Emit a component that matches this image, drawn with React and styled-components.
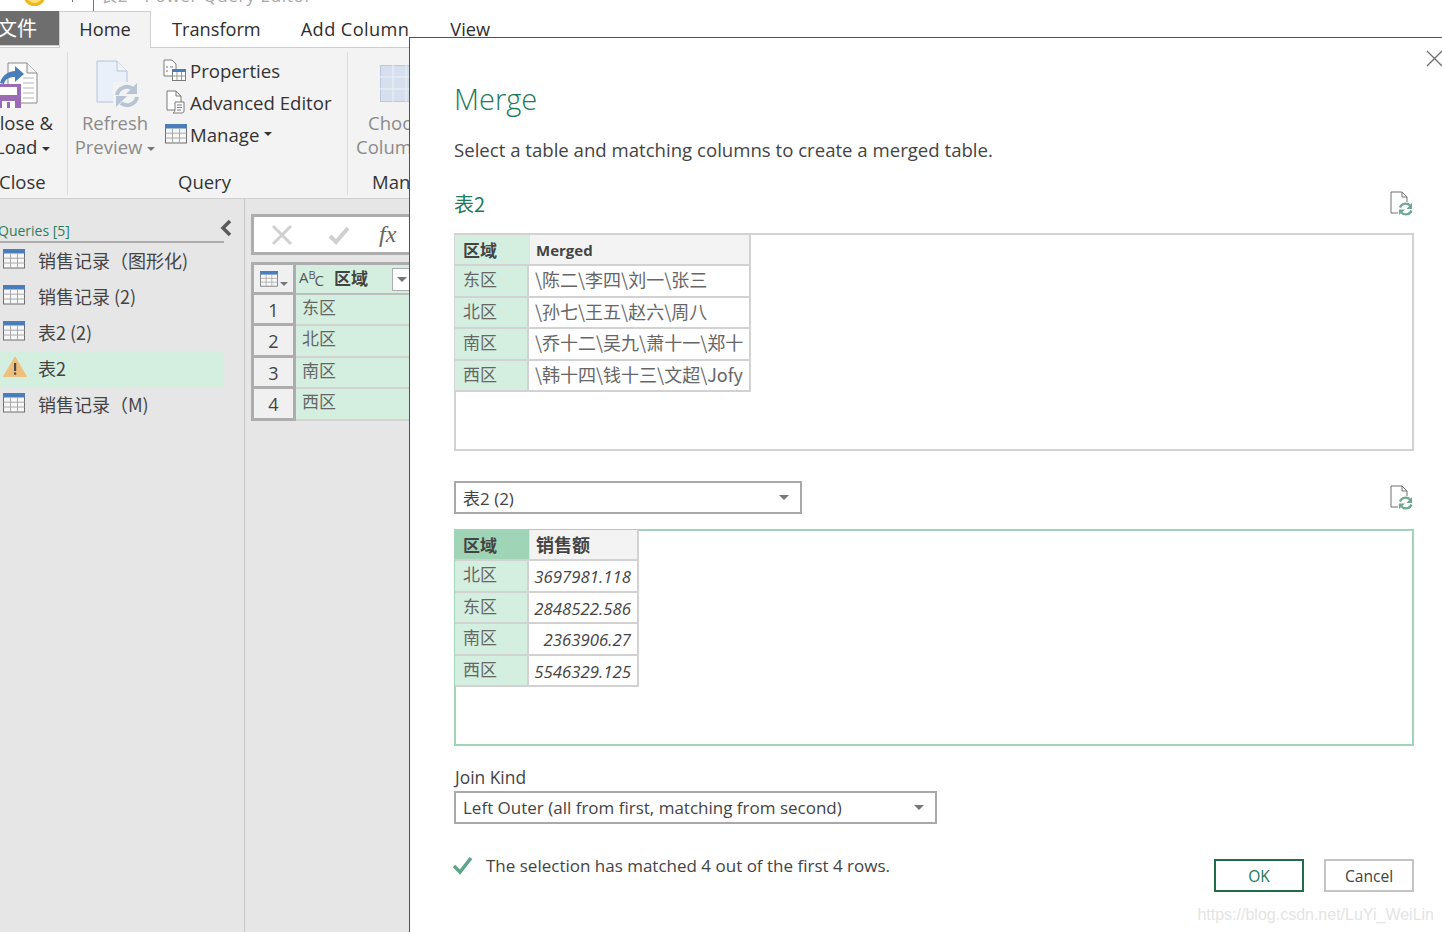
import React from 'react';
import styled, { createGlobalStyle } from 'styled-components';

const UI = '"Open Sans", "Noto Sans CJK SC", sans-serif';
const CJK = '"Noto Sans CJK SC", "Open Sans", sans-serif';

const Global = createGlobalStyle`
  html, body { margin: 0; padding: 0; background: #fff; overflow: hidden; }
  body { font-family: ${UI}; color: #333; }
  * { box-sizing: border-box; }
`;

const Page = styled.div`
  position: relative;
  width: 1442px;
  height: 932px;
  overflow: hidden;
  display: flex;
  flex-direction: column;
  background: #e6e6e6;
`;

/* title bar, mostly cut off by the screenshot */
const TitleBar = styled.div`
  height: 11px;
  flex: none;
  background: #fff;
  display: flex;
  align-items: flex-start;
  overflow: hidden;
  padding-left: 23px;
`;
const Smiley = styled.div`
  width: 23px;
  height: 23px;
  flex: none;
  margin-top: -17px;
  border-radius: 50%;
  border: 3px solid #f3b51d;
  background: #ffe37a;
`;
const TitleTick = styled.div`
  width: 1px;
  height: ${p => p.$height}px;
  background: #777;
  margin-left: ${p => p.$gap}px;
`;
const TitleText = styled.div`
  margin: -4px 0 0 6px;
  line-height: 0;
  font-size: 17px;
  letter-spacing: 0.7px;
  color: #a8a8a8;
  white-space: nowrap;
`;

const TabBar = styled.div`
  height: 37px;
  flex: none;
  display: flex;
  background: #fff;
  border-bottom: 1px solid #cfcfcf;
`;
const FileTab = styled.div`
  width: 59px;
  height: 34px;
  background: #6e6e6e;
  color: #fff;
  font: 20px/34px ${CJK};
  white-space: nowrap;
  overflow: hidden;
  text-indent: -3px;
  box-shadow: 0 1px 0 #cfcfcf;
`;
const HomeTab = styled.div`
  width: 92px;
  height: 37px;
  background: #f3f3f3;
  border: 1px solid #cfcfcf;
  border-bottom: none;
  text-align: center;
  font-size: 18.2px;
  line-height: 35px;
  color: #2d2d2d;
`;
const Tab = styled.div`
  font-size: 18.2px;
  line-height: 37px;
  color: #2d2d2d;
  margin-left: ${p => p.$left}px;
  letter-spacing: ${p => p.$track || 0}px;
  white-space: nowrap;
`;

const Ribbon = styled.div`
  height: 151px;
  flex: none;
  display: flex;
  background: #f3f3f3;
  border-bottom: 1px solid #cfcfcf;
  padding-top: 4px;
`;
const Group = styled.div`
  width: ${p => p.$width}px;
  flex: none;
  height: 143px;
  display: flex;
  flex-direction: column;
  border-right: ${p => (p.$last ? 'none' : '1px solid #dcdcdc')};
  overflow: hidden;
`;
const GroupBody = styled.div`
  height: 115px;
  flex: none;
  display: flex;
`;
const GroupLabel = styled.div`
  height: 28px;
  font-size: 18.5px;
  line-height: 29px;
  color: #333;
  text-align: left;
  margin-left: ${p => p.$left || 0}px;
  white-space: nowrap;
`;
const BigButton = styled.div`
  display: flex;
  flex-direction: column;
  align-items: ${p => p.$align || 'center'};
  width: ${p => p.$width}px;
  flex: none;
  padding-top: ${p => p.$top || 0}px;
  white-space: nowrap;
`;
const BigIcon = styled.div`
  flex: none;
  margin-left: ${p => p.$left || 0}px;
  margin-bottom: ${p => p.$bottom}px;
  svg { display: block; }
`;
const BigLabel = styled.div`
  font-size: 18.5px;
  line-height: 24px;
  margin-left: ${p => p.$left || 0}px;
  color: ${p => (p.$muted ? '#8b8b8b' : '#333')};
`;
const Caret = styled.span`
  display: inline-block;
  width: 0;
  height: 0;
  margin-left: ${p => p.$gap ?? 5}px;
  vertical-align: 3px;
  border-left: 4px solid transparent;
  border-right: 4px solid transparent;
  border-top: 4px solid ${p => p.$color || '#333'};
`;
const CornerCaret = styled(Caret)`
  margin: 10px 0 0 1px;
`;
const SmallStack = styled.div`
  display: flex;
  flex-direction: column;
  margin-left: 1px;
  padding-top: 2px;
`;
const SmallButton = styled.div`
  height: 32px;
  display: flex;
  align-items: center;
  gap: 2px;
  font-size: 18.6px;
  color: #333;
  white-space: nowrap;
`;
const SmallIcon = styled.div`
  width: 25px;
  height: 26px;
  flex: none;
  display: flex;
  align-items: center;
  justify-content: center;
`;

const Workspace = styled.div`
  flex: 1;
  display: flex;
`;
const QueryPane = styled.div`
  width: 245px;
  flex: none;
  border-right: 1px solid #c9c9c9;
  padding-top: 18px;
`;
const QueryHeader = styled.div`
  width: 224px;
  height: 26px;
  border-bottom: 2px solid #adadad;
  display: flex;
  align-items: flex-end;
  position: relative;
`;
const QueryTitle = styled.div`
  font-size: 14px;
  line-height: 24px;
  color: #2b7f5f;
  margin: 0 0 -2px -2px;
  white-space: nowrap;
`;
const Collapse = styled.div`
  position: absolute;
  left: 220px;
  top: 2px;
`;
const QueryRow = styled.div`
  width: 224px;
  height: 36px;
  display: flex;
  align-items: center;
  gap: 13px;
  padding: 0 0 2px 3px;
  background: ${p => (p.$active ? '#d4efe0' : 'transparent')};
  color: #444;
  font: 18px ${CJK};
  white-space: nowrap;
`;
const QueryIcon = styled.div`
  width: 22px;
  height: 22px;
  flex: none;
  margin-top: -3px;
`;

const GridArea = styled.div`
  flex: 1;
  padding: 15px 0 0 6px;
`;
const FormulaBar = styled.div`
  height: 41px;
  border: 3px solid #adadad;
  border-right: none;
  background: #fff;
  display: flex;
  align-items: center;
  padding-left: 17px;
  gap: 35px;
`;
const FxMark = styled.div`
  font: italic 24px "Liberation Serif", serif;
  color: #666;
  margin-left: -6px;
`;
const DataGrid = styled.div`
  margin-top: 7px;
  display: grid;
  grid-template-columns: 42px 1fr;
  grid-template-rows: 30px repeat(4, 31.4px);
  border-top: 3px solid #adadad;
  border-left: 3px solid #adadad;
`;
const CornerCell = styled.div`
  background: #f0f0f0;
  border-right: 3px solid #adadad;
  border-bottom: 3px solid #adadad;
  display: flex;
  align-items: center;
  justify-content: center;
`;
const GridHead = styled.div`
  background: #d4efe0;
  border-bottom: 2px solid #bdbdbd;
  display: flex;
  align-items: center;
  padding: 0 0 4px 3px;
  gap: 10px;
  font: bold 17px ${CJK};
  color: #444;
  position: relative;
`;
const TypeMark = styled.span`
  font: 15px "Open Sans", sans-serif;
  color: #555;
  display: flex;
  align-items: center;
`;
const TypeSup = styled.span`
  font-size: 11px;
  margin: -6px -1px 0 0;
`;
const TypeSub = styled.span`
  font-size: 15px;
  margin-top: 5px;
`;
const FilterButton = styled.div`
  position: absolute;
  left: 96px;
  top: 3px;
  width: 20px;
  height: 23px;
  background: #fff;
  border: 1px solid #adadad;
  display: flex;
  align-items: center;
  justify-content: center;
`;
const RowNumber = styled.div`
  background: #f0f0f0;
  border-right: 3px solid #adadad;
  border-bottom: 3px solid #adadad;
  text-align: center;
  font-size: 18px;
  line-height: 30px;
  color: #444;
`;
const GridCell = styled.div`
  background: #d4efe0;
  border-bottom: 2px solid #d2d2d2;
  padding-left: 6px;
  font: 17px/24px ${CJK};
  color: #666;
`;

/* the dialog lies over the editor */
const Dialog = styled.div`
  position: absolute;
  left: 409px;
  top: 37px;
  width: 1033px;
  height: 895px;
  background: #fff;
  border-left: 1px solid #1f6b4a;
  border-top: 1px solid #1f6b4a;
  padding: 0 28px 0 44px;
  display: flex;
  flex-direction: column;
`;
const CloseX = styled.div`
  position: absolute;
  left: 1016px;
  top: 12px;
`;
const Heading = styled.div`
  margin-top: 41px;
  height: 40px;
  font-size: 29px;
  font-weight: 300;
  line-height: 40px;
  color: #217a5a;
`;
const Intro = styled.div`
  margin-top: 17px;
  height: 28px;
  font-size: 18.6px;
  line-height: 28px;
  color: #444;
  white-space: nowrap;
`;
const SectionRow = styled.div`
  display: flex;
  align-items: center;
  justify-content: space-between;
  height: ${p => p.$height}px;
  margin-top: ${p => p.$top}px;
`;
const SectionName = styled.div`
  font-size: 20px;
  color: #217a5a;
  font-family: ${CJK};
`;
const PreviewBox = styled.div`
  height: ${p => (p.$selected ? 217 : 218)}px;
  margin-top: ${p => p.$top}px;
  border: 2px solid ${p => (p.$selected ? '#9fd4b8' : '#d2d2d2')};
  background: #fff;
`;
const PreviewTable = styled.div`
  display: inline-grid;
  grid-template-columns: 74px ${p => p.$second}px;
  grid-auto-rows: 29.4px;
  row-gap: 2px;
  background: #d2d2d2;
  border-right: 2px solid #d2d2d2;
  border-bottom: 2px solid #d2d2d2;
  margin: ${p => (p.$selected ? -1 : 0)}px 0 0 -1px;
  vertical-align: top;
`;
const KeyHead = styled.div`
  background: ${p => (p.$selected ? '#9fd4b6' : '#d4efe0')};
  font: bold 17px/29px ${CJK};
  color: #444;
  padding-left: 8px;
`;
const ValueHead = styled.div`
  background: #f3f3f3;
  border-left: 1px solid #e2e2e2;
  padding-left: 6px;
  font: bold ${p => p.$size || 15}px/30px ${UI};
  color: #444;
`;
const KeyCell = styled.div`
  background: #d4efe0;
  border-right: 2px solid #d2d2d2;
  font: 17px/25px ${CJK};
  color: #666;
  padding-left: 8px;
`;
const TextCell = styled.div`
  background: #fff;
  padding-left: 6px;
  font: 18px/27px ${CJK};
  color: #666;
  white-space: nowrap;
  overflow: hidden;
`;
const NumCell = styled.div`
  background: #fff;
  padding-right: 6px;
  text-align: right;
  font: italic 16.8px/31px ${UI};
  color: #444;
`;
const ComboBox = styled.div`
  width: ${p => p.$width}px;
  height: 33px;
  border: 2px solid #a9a9a9;
  background: #fff;
  display: flex;
  align-items: center;
  justify-content: space-between;
  padding: 0 11px 0 7px;
  font-size: 17px;
  color: #444;
  white-space: nowrap;
  flex: none;
`;
const ComboCaret = styled.span`
  width: 0;
  height: 0;
  border-left: 5px solid transparent;
  border-right: 5px solid transparent;
  border-top: 5px solid #777;
`;
const JoinLabel = styled.div`
  margin: 18px 0 0 1px;
  height: 27px;
  font-size: 17.4px;
  line-height: 26px;
  color: #444;
`;
const FooterRow = styled.div`
  display: flex;
  align-items: flex-start;
  margin-top: 28px;
`;
const Status = styled.div`
  display: flex;
  align-items: center;
  height: 28px;
  gap: 13px;
  font-size: 17px;
  color: #444;
  white-space: nowrap;
  flex: 1;
  margin: -1px 0 0 -2px;
`;
const ActionButton = styled.div`
  width: 90px;
  height: 33px;
  margin: 7px 0 0 20px;
  background: #fff;
  border: 2px solid ${p => (p.$primary ? '#1f6b4a' : '#c4c4c4')};
  text-align: center;
  font-size: 15.6px;
  line-height: 30px;
  color: ${p => (p.$primary ? '#217a5a' : '#444')};
`;
const Watermark = styled.div`
  position: absolute;
  right: 8px;
  bottom: 8px;
  font: 16px "Liberation Sans", sans-serif;
  color: #e4e4e4;
  white-space: nowrap;
`;

const TableIcon = ({ w = 22, h = 20 }) => (
  <svg width={w} height={h} viewBox="0 0 22 20">
    <rect x="0.5" y="0.5" width="21" height="18.5" fill="#f7f7f7" stroke="#6e6e6e" />
    <rect x="0" y="0" width="22" height="4.5" fill="#4a7eba" />
    <path d="M0.5 9.2H21.5M0.5 14H21.5M7.5 4.5V19M14.5 4.5V19" stroke="#a8a8a8" fill="none" />
  </svg>
);

const WarnIcon = () => (
  <svg width="24" height="22" viewBox="0 0 24 22">
    <path d="M12 1 L23.5 20.5 H0.5 Z" fill="#eebf7c" stroke="#eebf7c" strokeLinejoin="round" />
    <rect x="11" y="7" width="2.2" height="8" fill="#4a4a4a" />
    <rect x="11" y="16.5" width="2.2" height="2.2" fill="#4a4a4a" />
  </svg>
);

const ReloadDoc = () => (
  <svg width="24" height="25" viewBox="0 0 24 25">
    <path d="M1 1H12L17 6V22H1Z M12 1V6H17" fill="none" stroke="#707070" strokeWidth="1" />
    <rect x="8" y="11" width="16" height="14" fill="#fff" />
    <path d="M10 16.5A6 6 0 0 1 20 14.5" fill="none" stroke="#6aa98f" strokeWidth="2.2" />
    <path d="M22 12V18H16.5Z" fill="#6aa98f" />
    <path d="M21.5 19.5A6 6 0 0 1 11.5 21.5" fill="none" stroke="#6aa98f" strokeWidth="2.2" />
    <path d="M9 24V18.5H15Z" fill="#6aa98f" />
  </svg>
);

const CloseLoadIcon = () => (
  <svg width="38" height="46" viewBox="0 0 38 46">
    <path d="M8 1H27L37 11V41H8Z" fill="#fff" stroke="#8a8a8a" />
    <path d="M27 1V11H37" fill="#f3f3f3" stroke="#8a8a8a" />
    <path d="M23 16H34M23 21H34M23 26H34M23 31H34M23 36H34" stroke="#b5b5b5" />
    <path d="M0 21 C2 13 9 9 15 9 V4 L24 12 L15 20 V15 C9 15 5 17 4 22Z" fill="#4a7eba" />
    <rect x="0" y="22" width="21" height="24" fill="#9b6bb5" />
    <rect x="0" y="25" width="17" height="8" fill="#fff" />
    <rect x="2" y="39" width="13" height="7" fill="#fff" />
    <rect x="7" y="40" width="3" height="6" fill="#9b6bb5" />
  </svg>
);

const RefreshIcon = () => (
  <svg width="44" height="48" viewBox="0 0 44 48">
    <path d="M1 1H21L31 11V42H1Z" fill="#e9f0fa" stroke="#b4c4dd" />
    <path d="M21 1V11H31" fill="#f3f3f3" stroke="#b4c4dd" />
    <rect x="17" y="22" width="27" height="26" fill="#f3f3f3" />
    <path d="M21 35A10 10 0 0 1 37 29" fill="none" stroke="#b6c4d6" strokeWidth="4" />
    <path d="M41 23V34H30Z" fill="#b6c4d6" />
    <path d="M41 37A10 10 0 0 1 25 43" fill="none" stroke="#b6c4d6" strokeWidth="4" />
    <path d="M20 47V36H31Z" fill="#b6c4d6" />
  </svg>
);

const PropertiesIcon = () => (
  <svg width="25" height="23" viewBox="0 0 25 23">
    <path d="M1 1H9L13 5V17H1Z" fill="#fff" stroke="#7a7a7a" />
    <path d="M3 8H5M3 12H5M7 8H10" stroke="#7a7a7a" />
    <rect x="9.5" y="10.5" width="13" height="11" fill="#fff" stroke="#7a7a7a" />
    <rect x="9" y="10" width="14" height="3" fill="#4a7eba" />
    <path d="M9.5 17H22.5M14 13V21M18.5 13V21" stroke="#999" />
  </svg>
);

const EditorIcon = () => (
  <svg width="20" height="24" viewBox="0 0 20 24">
    <path d="M1 1H10L15 6V20H1Z M10 1V6H15" fill="#fff" stroke="#7a7a7a" />
    <path d="M9 12H18V21C18 23 16 23 15 23H7C8 22 9 22 9 20Z" fill="#fff" stroke="#7a7a7a" />
    <path d="M11 15H16M11 17.5H16M11 20H15" stroke="#7a7a7a" />
  </svg>
);

const leftRows = [
  { label: '东区', text: '\\陈二\\李四\\刘一\\张三' },
  { label: '北区', text: '\\孙七\\王五\\赵六\\周八' },
  { label: '南区', text: '\\乔十二\\吴九\\萧十一\\郑十' },
  { label: '西区', text: '\\韩十四\\钱十三\\文超\\Jofy' },
];

const rightRows = [
  { label: '北区', value: '3697981.118' },
  { label: '东区', value: '2848522.586' },
  { label: '南区', value: '2363906.27' },
  { label: '西区', value: '5546329.125' },
];

const queries = [
  { name: '销售记录（图形化)' },
  { name: '销售记录 (2)' },
  { name: '表2 (2)' },
  { name: '表2', warn: true },
  { name: '销售记录（M)' },
];

export default function App() {
  return (
    <Page>
      <Global />
      <TitleBar>
        <Smiley />
        <TitleTick $gap={26} $height={2} />
        <TitleTick $gap={20} $height={11} />
        <TitleText>表2 - Power Query Editor</TitleText>
      </TitleBar>
      <TabBar>
        <FileTab>文件</FileTab>
        <HomeTab>Home</HomeTab>
        <Tab $left={21}>Transform</Tab>
        <Tab $left={40} $track={0.4}>Add Column</Tab>
        <Tab $left={41}>View</Tab>
      </TabBar>
      <Ribbon>
        <Group $width={68}>
          <GroupBody>
            <BigButton $width={68} $align="flex-start" $top={10}>
              <BigIcon $bottom={3}><CloseLoadIcon /></BigIcon>
              <BigLabel $left={-12}>Close &amp;</BigLabel>
              <BigLabel $left={-5}>Load<Caret /></BigLabel>
            </BigButton>
          </GroupBody>
          <GroupLabel $left={-1}>Close</GroupLabel>
        </Group>
        <Group $width={280}>
          <GroupBody>
            <BigButton $width={94} $top={8}>
              <BigIcon $left={5} $bottom={3}><RefreshIcon /></BigIcon>
              <BigLabel $muted>Refresh</BigLabel>
              <BigLabel $muted>Preview<Caret $color="#777" /></BigLabel>
            </BigButton>
            <SmallStack>
              <SmallButton><SmallIcon><PropertiesIcon /></SmallIcon>Properties</SmallButton>
              <SmallButton><SmallIcon><EditorIcon /></SmallIcon>Advanced Editor</SmallButton>
              <SmallButton><SmallIcon><TableIcon /></SmallIcon>Manage<Caret $gap={3} /></SmallButton>
            </SmallStack>
          </GroupBody>
          <GroupLabel $left={110}>Query</GroupLabel>
        </Group>
        <Group $width={80} $last>
          <GroupBody>
            <BigButton $width={80} $align="flex-start" $top={13}>
              <BigIcon $left={32} $bottom={8}>
                <svg width="50" height="38" viewBox="0 0 50 38">
                  <rect x="0.5" y="0.5" width="49" height="36" fill="#d5dfee" stroke="#b8c8de" />
                  <path d="M0 12H50M0 24H50M13 0V37M26 0V37" stroke="#eef2f8" />
                </svg>
              </BigIcon>
              <BigLabel $muted $left={20}>Choose</BigLabel>
              <BigLabel $muted $left={8}>Columns</BigLabel>
            </BigButton>
          </GroupBody>
          <GroupLabel $left={24}>Manage</GroupLabel>
        </Group>
      </Ribbon>
      <Workspace>
        <QueryPane>
          <QueryHeader>
            <QueryTitle>Queries [5]</QueryTitle>
            <Collapse>
              <svg width="12" height="18" viewBox="0 0 12 18">
                <path d="M10 2L3 9L10 16" fill="none" stroke="#5a5a5a" strokeWidth="3.5" />
              </svg>
            </Collapse>
          </QueryHeader>
          {queries.map(q => (
            <QueryRow key={q.name} $active={q.warn}>
              <QueryIcon>{q.warn ? <WarnIcon /> : <TableIcon />}</QueryIcon>
              {q.name}
            </QueryRow>
          ))}
        </QueryPane>
        <GridArea>
          <FormulaBar>
            <svg width="22" height="22" viewBox="0 0 22 22">
              <path d="M2 2L20 20M20 2L2 20" stroke="#d0d0d0" strokeWidth="3" />
            </svg>
            <svg width="22" height="20" viewBox="0 0 22 20">
              <path d="M2 11L8 17L20 3" fill="none" stroke="#d0d0d0" strokeWidth="4" />
            </svg>
            <FxMark>fx</FxMark>
          </FormulaBar>
          <DataGrid>
            <CornerCell>
              <TableIcon w={20} h={16} />
              <CornerCaret $color="#777" />
            </CornerCell>
            <GridHead>
              <TypeMark>A<TypeSup>B</TypeSup><TypeSub>C</TypeSub></TypeMark>
              区域
              <FilterButton><ComboCaret /></FilterButton>
            </GridHead>
            {leftRows.map((r, i) => (
              <React.Fragment key={r.label}>
                <RowNumber>{i + 1}</RowNumber>
                <GridCell>{r.label}</GridCell>
              </React.Fragment>
            ))}
          </DataGrid>
        </GridArea>
      </Workspace>

      <Dialog>
        <CloseX>
          <svg width="17" height="17" viewBox="0 0 17 17">
            <path d="M1 1L16 16M16 1L1 16" stroke="#6e6e6e" strokeWidth="1.3" />
          </svg>
        </CloseX>
        <Heading>Merge</Heading>
        <Intro>Select a table and matching columns to create a merged table.</Intro>
        <SectionRow $height={28} $top={25}>
          <SectionName>表2</SectionName>
          <ReloadDoc />
        </SectionRow>
        <PreviewBox $top={16}>
          <PreviewTable $second={220}>
            <KeyHead>区域</KeyHead>
            <ValueHead>Merged</ValueHead>
            {leftRows.map(r => (
              <React.Fragment key={r.label}>
                <KeyCell>{r.label}</KeyCell>
                <TextCell>{r.text}</TextCell>
              </React.Fragment>
            ))}
          </PreviewTable>
        </PreviewBox>
        <SectionRow $height={33} $top={30}>
          <ComboBox $width={348}>表2 (2)<ComboCaret /></ComboBox>
          <ReloadDoc />
        </SectionRow>
        <PreviewBox $top={15} $selected>
          <PreviewTable $second={108} $selected>
            <KeyHead $selected>区域</KeyHead>
            <ValueHead $size={18}>销售额</ValueHead>
            {rightRows.map(r => (
              <React.Fragment key={r.label}>
                <KeyCell>{r.label}</KeyCell>
                <NumCell>{r.value}</NumCell>
              </React.Fragment>
            ))}
          </PreviewTable>
        </PreviewBox>
        <JoinLabel>Join Kind</JoinLabel>
        <ComboBox $width={483}>Left Outer (all from first, matching from second)<ComboCaret /></ComboBox>
        <FooterRow>
          <Status>
            <svg width="21" height="20" viewBox="0 0 21 20">
              <path d="M2 11L8 17L19 3" fill="none" stroke="#5fa58a" strokeWidth="3.5" />
            </svg>
            The selection has matched 4 out of the first 4 rows.
          </Status>
          <ActionButton $primary>OK</ActionButton>
          <ActionButton>Cancel</ActionButton>
        </FooterRow>
      </Dialog>
      <Watermark>https://blog.csdn.net/LuYi_WeiLin</Watermark>
    </Page>
  );
}
